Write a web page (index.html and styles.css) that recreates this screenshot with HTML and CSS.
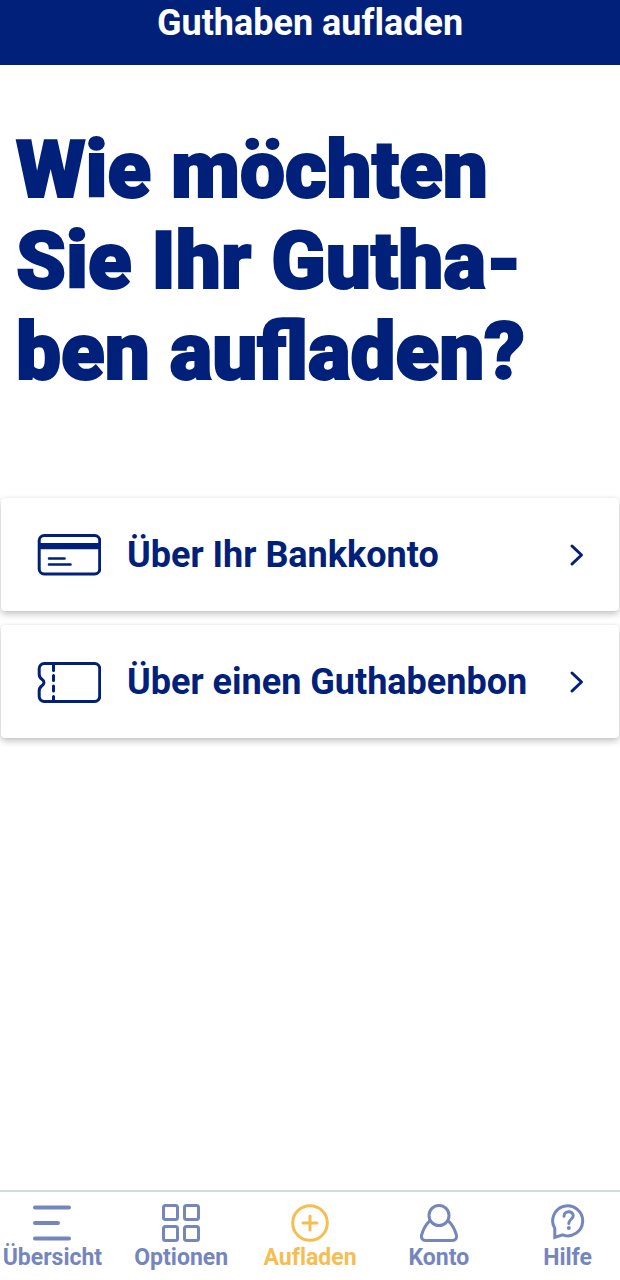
FILE: index.html
```html
<!DOCTYPE html>
<html lang="de">
<head>
<meta charset="utf-8">
<meta name="viewport" content="width=device-width, initial-scale=1">
<title>Guthaben aufladen</title>
<link rel="stylesheet" href="styles.css">
</head>
<body>
<div class="app">
  <header class="topbar"><span class="topbar-title">Guthaben aufladen</span></header>
  <main class="content">
    <h1 class="question">Wie möchten Sie Ihr Gutha&shy;ben aufladen?</h1>
    <div class="options">
      <button class="option" type="button">
        <svg class="option-icon" viewBox="0 0 64 42" aria-hidden="true">
          <rect x="2.200" y="1.500" width="60.500" height="38.500" rx="5"/>
          <path class="solid" d="M1.500 9h61.500v6.200H1.500z"/>
          <path d="M12 24.500h15.500M12 30.500h21.500" stroke-linecap="round" stroke-width="2.600"/>
        </svg>
        <span class="option-label">Über Ihr Bankkonto</span>
        <svg class="chevron" viewBox="0 0 16 24" aria-hidden="true"><path d="M3 3l9.500 9L3 21"/></svg>
      </button>
      <button class="option" type="button">
        <svg class="option-icon" viewBox="0 0 64 42" aria-hidden="true">
          <path d="M7.200 2.500h50.500a5 5 0 0 1 5 5v28a5 5 0 0 1-5 5H7.200a5 5 0 0 1-5-5v-6c0-5 4.800-4.500 4.800-8s-4.800-3-4.800-8v-6a5 5 0 0 1 5-5z"/>
          <path d="M16.500 4v5.500M16.500 14.500v5M16.500 25v5M16.500 35.500V40" stroke-linecap="round"/>
        </svg>
        <span class="option-label">Über einen Guthabenbon</span>
        <svg class="chevron" viewBox="0 0 16 24" aria-hidden="true"><path d="M3 3l9.500 9L3 21"/></svg>
      </button>
    </div>
  </main>
  <nav class="tabbar" aria-label="Hauptnavigation">
    <div class="tabs">
      <a class="tab" href="#uebersicht">
        <svg class="tab-icon" viewBox="0 0 38 38" aria-hidden="true"><path d="M2 3.500h34M2 19h23M2 34.500h34" stroke-width="4"/></svg>
        <span>Übersicht</span>
      </a>
      <a class="tab" href="#optionen">
        <svg class="tab-icon" viewBox="0 0 38 38" aria-hidden="true">
          <rect x="1.500" y="1.500" width="14" height="14" rx="2"/><rect x="22.500" y="1.500" width="14" height="14" rx="2"/>
          <rect x="1.500" y="22.500" width="14" height="14" rx="2"/><rect x="22.500" y="22.500" width="14" height="14" rx="2"/>
        </svg>
        <span>Optionen</span>
      </a>
      <a class="tab active" href="#aufladen" aria-current="page">
        <svg class="tab-icon" viewBox="0 0 38 38" aria-hidden="true"><circle cx="19" cy="19" r="17.300"/><path d="M19 12v14M12 19h14"/></svg>
        <span>Aufladen</span>
      </a>
      <a class="tab" href="#konto">
        <svg class="tab-icon" viewBox="0 0 38 38" aria-hidden="true">
          <circle cx="19" cy="11.500" r="10"/>
          <path d="M9.500 17.200C6 20.500 3 26 1.600 31c-.8 3 1 5.500 4 5.500h26.800c3 0 4.800-2.500 4-5.500C35 26 32 20.500 28.500 17.200"/>
        </svg>
        <span>Konto</span>
      </a>
      <a class="tab" href="#hilfe">
        <svg class="tab-icon" viewBox="0 0 38 38" aria-hidden="true">
          <path d="M5.800 33.500V24.500A15 15 0 1 1 13.500 30.900Z" stroke-linejoin="miter"/>
          <path d="M15 12.200c0-5.800 9.200-5.800 9.200-.5 0 3.500-4.400 3.700-4.400 7.800"/><circle class="dot" cx="19.800" cy="24" r="2"/>
        </svg>
        <span>Hilfe</span>
      </a>
    </div>
  </nav>
</div>
</body>
</html>
```
FILE: styles.css
```css
* { box-sizing: border-box; }
body {
  margin: 0;
  background: #fff;
  color: #00207a;
  font-family: Roboto, "Liberation Sans", sans-serif;
  font-variant-ligatures: none;
}
.app {
  display: flex;
  flex-direction: column;
  min-height: 100vh;
}
.topbar {
  padding: 0 16px 18px;
  background: #00207a;
  color: #fff;
  text-align: center;
}
.topbar-title {
  display: block;
  font-size: 36px;
  font-weight: 700;
  line-height: 47px;
}
.content { flex: 1; }
.question {
  margin: 0;
  padding: 60px 16px 0;
  font-size: 80px;
  font-weight: 900;
  font-variant-ligatures: normal;
  line-height: 91px;
  -webkit-text-stroke: 2px currentColor;
}
.options {
  display: grid;
  gap: 14px;
  padding: 100px 1px 0;
}
.option {
  display: flex;
  align-items: center;
  gap: 26px;
  width: 100%;
  padding: 35px 34px 34px 36px;
  border: 0;
  border-radius: 4px;
  background: #fff;
  box-shadow: 0 3px 7px rgba(0, 0, 0, 0.24), 0 0 2px rgba(0, 0, 0, 0.08);
  color: inherit;
  font: inherit;
  text-align: left;
}
.option-icon {
  flex: none;
  width: 64px;
  height: 42px;
  fill: none;
  stroke: currentColor;
  stroke-width: 3;
}
.option-icon .solid { fill: currentColor; stroke: none; }
.option-label {
  flex: 1;
  font-size: 36px;
  font-weight: 700;
  line-height: 44px;
}
.chevron {
  flex: none;
  width: 16px;
  height: 24px;
  fill: none;
  stroke: currentColor;
  stroke-width: 3;
  stroke-linecap: round;
  stroke-linejoin: round;
}
.tabbar {
  overflow: hidden;
  border-top: 2px solid #d5dadd;
}
.tabs {
  display: grid;
  grid-template-columns: repeat(5, 1fr);
  margin: 0 -12px;
  padding: 12px 0 8px;
}
.tab {
  display: flex;
  flex-direction: column;
  align-items: center;
  gap: 2px;
  color: #7586bd;
  font-size: 23px;
  font-weight: 700;
  line-height: 28px;
  text-decoration: none;
}
.tab.active { color: #f6be52; }
.tab-icon {
  width: 38px;
  height: 38px;
  fill: none;
  stroke: currentColor;
  stroke-width: 3;
  stroke-linecap: round;
  stroke-linejoin: round;
}
.tab-icon .dot { fill: currentColor; stroke: none; }
```
